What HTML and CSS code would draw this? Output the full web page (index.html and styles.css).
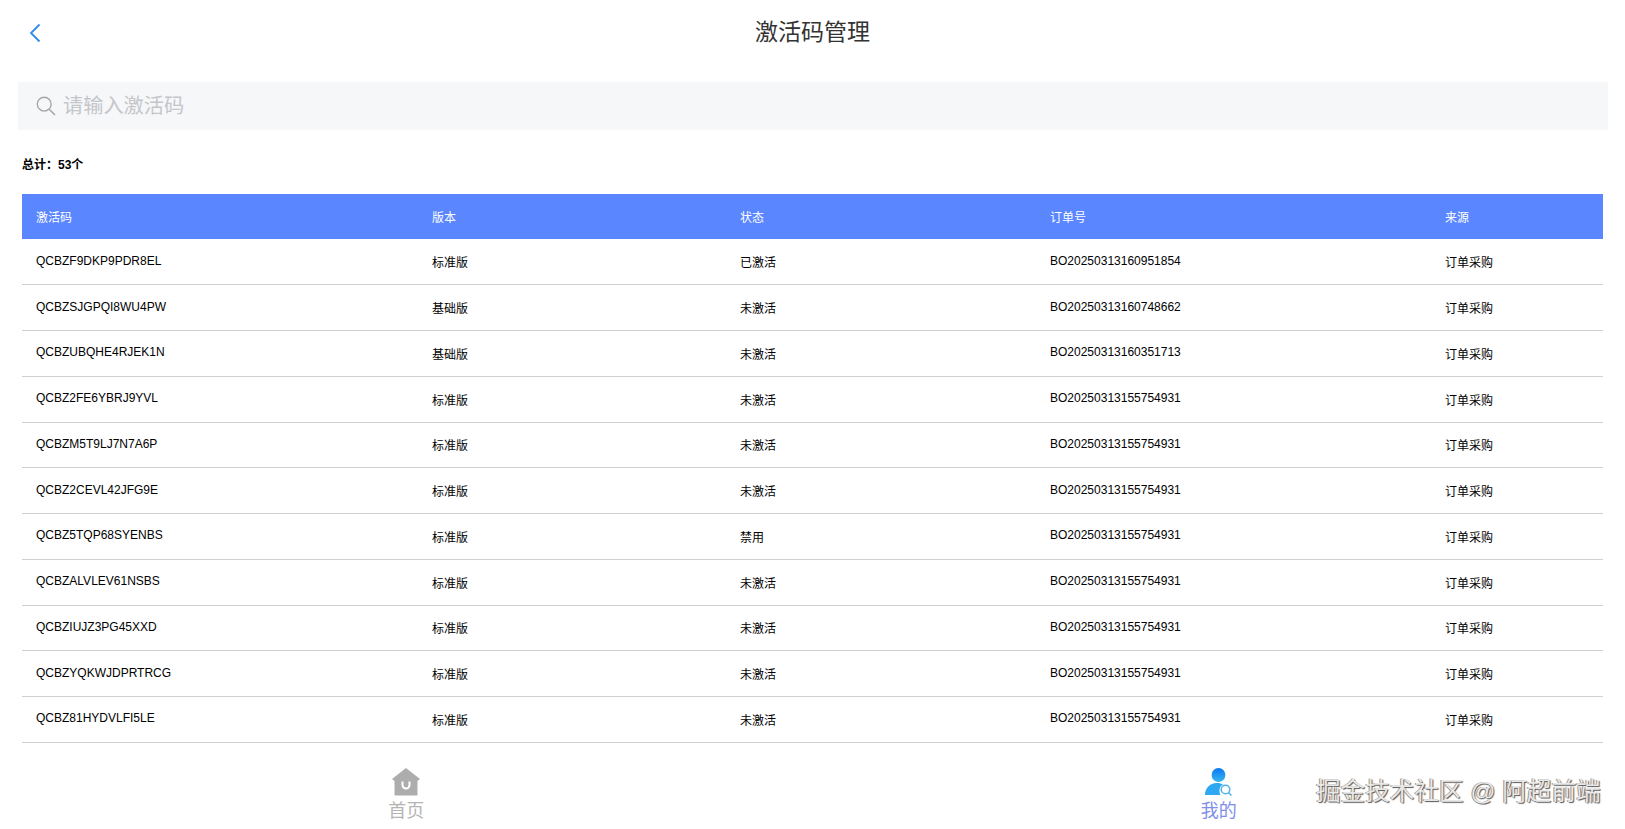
FILE: index.html
```html
<!DOCTYPE html>
<html lang="zh-CN">
<head>
<meta charset="utf-8">
<title>激活码管理</title>
<link rel="stylesheet" href="styles.css">
</head>
<body>
<div class="page">
  <header class="nav">
    <svg class="back" viewBox="0 0 12 20" width="12" height="20" aria-hidden="true"><path d="M10.500 1.500 2 10l8.500 8.500" fill="none" stroke="#2f8bea" stroke-width="1.800"/></svg>
    <h1 class="title">激活码管理</h1>
  </header>
  <div class="search">
    <svg class="search-icon" viewBox="0 0 20 20" width="20" height="20" aria-hidden="true"><circle cx="8.200" cy="8.200" r="6.900" fill="none" stroke="#a6a6a6" stroke-width="1.400"/><path d="M13.200 13.200 19 19" fill="none" stroke="#a6a6a6" stroke-width="1.600"/></svg>
    <span class="placeholder">请输入激活码</span>
  </div>
  <p class="total">总计：53个</p>
  <table class="grid">
    <colgroup><col class="c1"><col class="c2"><col class="c3"><col class="c4"><col class="c5"></colgroup>
    <thead><tr><th>激活码</th><th>版本</th><th>状态</th><th>订单号</th><th>来源</th></tr></thead>
    <tbody>
      <tr><td class="latin">QCBZF9DKP9PDR8EL</td><td>标准版</td><td>已激活</td><td class="latin">BO20250313160951854</td><td>订单采购</td></tr>
      <tr><td class="latin">QCBZSJGPQI8WU4PW</td><td>基础版</td><td>未激活</td><td class="latin">BO20250313160748662</td><td>订单采购</td></tr>
      <tr><td class="latin">QCBZUBQHE4RJEK1N</td><td>基础版</td><td>未激活</td><td class="latin">BO20250313160351713</td><td>订单采购</td></tr>
      <tr><td class="latin">QCBZ2FE6YBRJ9YVL</td><td>标准版</td><td>未激活</td><td class="latin">BO20250313155754931</td><td>订单采购</td></tr>
      <tr><td class="latin">QCBZM5T9LJ7N7A6P</td><td>标准版</td><td>未激活</td><td class="latin">BO20250313155754931</td><td>订单采购</td></tr>
      <tr><td class="latin">QCBZ2CEVL42JFG9E</td><td>标准版</td><td>未激活</td><td class="latin">BO20250313155754931</td><td>订单采购</td></tr>
      <tr><td class="latin">QCBZ5TQP68SYENBS</td><td>标准版</td><td>禁用</td><td class="latin">BO20250313155754931</td><td>订单采购</td></tr>
      <tr><td class="latin">QCBZALVLEV61NSBS</td><td>标准版</td><td>未激活</td><td class="latin">BO20250313155754931</td><td>订单采购</td></tr>
      <tr><td class="latin">QCBZIUJZ3PG45XXD</td><td>标准版</td><td>未激活</td><td class="latin">BO20250313155754931</td><td>订单采购</td></tr>
      <tr><td class="latin">QCBZYQKWJDPRTRCG</td><td>标准版</td><td>未激活</td><td class="latin">BO20250313155754931</td><td>订单采购</td></tr>
      <tr><td class="latin">QCBZ81HYDVLFI5LE</td><td>标准版</td><td>未激活</td><td class="latin">BO20250313155754931</td><td>订单采购</td></tr>
    </tbody>
  </table>
  <nav class="tabs">
    <div class="tab">
      <svg class="tab-icon" viewBox="0 0 28 28" width="28" height="28" aria-hidden="true"><path d="M14 0 28 11 25.500 13V27.500H2.500V13L0 11Z" fill="#adadad"/><path d="M10.500 13.500v3.500a3.500 3.500 0 0 0 7 0v-3.500" fill="none" stroke="#fff" stroke-width="2"/></svg>
      <span class="tab-label">首页</span>
    </div>
    <div class="tab">
      <svg class="tab-icon" viewBox="0 0 28 28" width="28" height="28" aria-hidden="true">
        <defs><linearGradient id="me" x1="0" y1="0" x2="0" y2="1"><stop offset="0" stop-color="#0a78f0"/><stop offset="1" stop-color="#38b6f2"/></linearGradient></defs>
        <circle cx="13.500" cy="7" r="6.900" fill="url(#me)"/>
        <path d="M0 27c0-7 5-12 11.500-12 3 0 5.500 .7 6.500 1.500-3.500 1.500-4.500 6.500-2.500 10.500Z" fill="#2ea8f2"/>
        <circle cx="20.500" cy="21.500" r="4.300" fill="none" stroke="#4cb4ea" stroke-width="1.500"/>
        <path d="m23.500 24.500 3 3" stroke="#4cb4ea" stroke-width="1.500"/>
      </svg>
      <span class="tab-label active">我的</span>
    </div>
  </nav>
  <div class="watermark">掘金技术社区 @ 阿超前端</div>
</div>
</body>
</html>
```
FILE: styles.css
```css
* { box-sizing: border-box; }
html, body { margin: 0; padding: 0; background: #fff; }
body { font-family: "Liberation Sans", "Noto Sans CJK SC", sans-serif; color: #000; }
.page { position: relative; width: 1625px; height: 829px; overflow: hidden; }
.nav { position: relative; height: 82px; display: flex; align-items: center; justify-content: center; padding-bottom: 18px; }
.back { position: absolute; left: 29px; top: 23px; }
.title { margin: 0; font-size: 23px; font-weight: 400; color: #333; line-height: 32px; }
.search { height: 48px; margin: 0 17px 0 18px; background: #f6f7f9; display: flex; align-items: center; padding-left: 18px; gap: 7px; }
.search-icon { flex: none; }
.placeholder { font-size: 20.200px; color: #c4c6c9; line-height: 28px; }
.total { margin: 26px 0 0 22px; height: 18px; line-height: 18px; font-size: 12px; font-weight: 700; color: #000; }
.grid { margin: 20px 0 0 22px; width: 1581px; border-collapse: collapse; table-layout: fixed; }
.c1 { width: 396px; }
.c2 { width: 308px; }
.c3 { width: 310px; }
.c4 { width: 395px; }
.c5 { width: 172px; }
.grid th { height: 45px; padding: 0 14px 1px; background: #5a86ff; color: #fff; font-size: 12px; font-weight: 400; text-align: left; }
.grid td { height: 45.750px; padding: 0 14px; font-size: 12px; color: #000; border-bottom: 1px solid #d0d0d0; }
.grid td.latin { padding-bottom: 2px; }
.tabs { margin-top: 25px; display: flex; }
.tab { flex: 1; display: flex; flex-direction: column; align-items: center; }
.tab-icon { display: block; }
.tab-label { font-size: 18px; line-height: 22px; margin-top: 4px; color: #b4b4b4; }
.tab-label.active { color: #7f8ee8; }
.watermark { position: absolute; left: 1316px; top: 776px; font-size: 24.600px; line-height: 32px; color: #e8e8e8; white-space: nowrap; text-shadow: 1px 1px 1px #555, -1px 0 0 #999; }
```
